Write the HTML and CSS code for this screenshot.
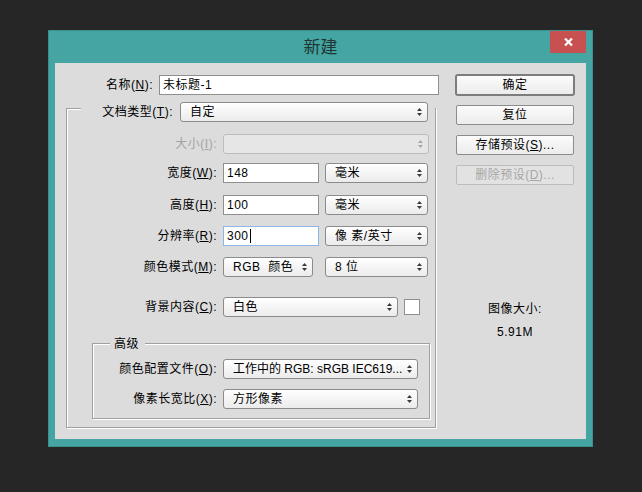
FILE: index.html
```html
<!DOCTYPE html>
<html lang="zh-CN">
<head>
<meta charset="utf-8">
<title>新建</title>
<link rel="stylesheet" href="styles.css">
</head>
<body>
<div class="dialog">
  <div class="titlebar">
    <span></span>
    <div class="title">新建</div>
    <div class="close"><svg width="9" height="8" viewBox="0 0 9 8"><path d="M1 0.5 L8 7.5 M8 0.5 L1 7.5" stroke="#fff" stroke-width="2.2" fill="none"/></svg></div>
  </div>
  <div class="client">
    <div class="main">
      <div class="row name-row">
        <span class="lbl name-lbl">名称(<u>N</u>):</span>
        <div class="input name-in">未标题-1</div>
      </div>
      <div class="group outer">
        <div class="legend-row">
          <span class="lbl type-lbl">文档类型(<u>T</u>):</span>
          <div class="select type-sel"><span>自定</span><svg class="arr" width="5" height="8" viewBox="0 0 5 8"><path d="M2.5 0 L5 3 H0Z M0 5 H5 L2.5 8Z"/></svg></div>
        </div>
        <div class="row r-size">
          <span class="lbl glbl dis">大小(<u>I</u>):</span>
          <div class="select dis size-sel"><span></span><svg class="arr" width="5" height="8" viewBox="0 0 5 8"><path d="M2.5 0 L5 3 H0Z M0 5 H5 L2.5 8Z"/></svg></div>
        </div>
        <div class="row r-w">
          <span class="lbl glbl">宽度(<u>W</u>):</span>
          <div class="input num-in">148</div>
          <div class="select unit-sel"><span>毫米</span><svg class="arr" width="5" height="8" viewBox="0 0 5 8"><path d="M2.5 0 L5 3 H0Z M0 5 H5 L2.5 8Z"/></svg></div>
        </div>
        <div class="row r-h">
          <span class="lbl glbl">高度(<u>H</u>):</span>
          <div class="input num-in">100</div>
          <div class="select unit-sel"><span>毫米</span><svg class="arr" width="5" height="8" viewBox="0 0 5 8"><path d="M2.5 0 L5 3 H0Z M0 5 H5 L2.5 8Z"/></svg></div>
        </div>
        <div class="row r-r">
          <span class="lbl glbl">分辨率(<u>R</u>):</span>
          <div class="input num-in focus">300<span class="caret"></span></div>
          <div class="select unit-sel"><span>像 素/英寸</span><svg class="arr" width="5" height="8" viewBox="0 0 5 8"><path d="M2.5 0 L5 3 H0Z M0 5 H5 L2.5 8Z"/></svg></div>
        </div>
        <div class="row r-m">
          <span class="lbl glbl">颜色模式(<u>M</u>):</span>
          <div class="select mode-sel"><span>RGB&nbsp; 颜色</span><svg class="arr" width="5" height="8" viewBox="0 0 5 8"><path d="M2.5 0 L5 3 H0Z M0 5 H5 L2.5 8Z"/></svg></div>
          <div class="select unit-sel bits"><span>8 位</span><svg class="arr" width="5" height="8" viewBox="0 0 5 8"><path d="M2.5 0 L5 3 H0Z M0 5 H5 L2.5 8Z"/></svg></div>
        </div>
        <div class="row r-bg">
          <span class="lbl glbl">背景内容(<u>C</u>):</span>
          <div class="select bg-sel"><span>白色</span><svg class="arr" width="5" height="8" viewBox="0 0 5 8"><path d="M2.5 0 L5 3 H0Z M0 5 H5 L2.5 8Z"/></svg></div>
          <div class="swatch"></div>
        </div>
        <div class="group inner">
          <div class="legend-text">高级</div>
          <div class="row r-prof">
            <span class="lbl ilbl">颜色配置文件(<u>O</u>):</span>
            <div class="select adv-sel"><span class="tight">工作中的 RGB: sRGB IEC619...</span><svg class="arr" width="5" height="8" viewBox="0 0 5 8"><path d="M2.5 0 L5 3 H0Z M0 5 H5 L2.5 8Z"/></svg></div>
          </div>
          <div class="row r-px">
            <span class="lbl ilbl">像素长宽比(<u>X</u>):</span>
            <div class="select adv-sel"><span>方形像素</span><svg class="arr" width="5" height="8" viewBox="0 0 5 8"><path d="M2.5 0 L5 3 H0Z M0 5 H5 L2.5 8Z"/></svg></div>
          </div>
        </div>
      </div>
    </div>
    <div class="side">
      <div class="btn default">确定</div>
      <div class="btn b2">复位</div>
      <div class="btn b3">存储预设(<u>S</u>)...</div>
      <div class="btn b3 disabled">删除预设(<u>D</u>)...</div>
      <div class="imgsize">
        <div class="is-title">图像大小:</div>
        <div class="is-val">5.91M</div>
      </div>
    </div>
  </div>
</div>
</body>
</html>
```
FILE: styles.css
```css
* { box-sizing: border-box; }
body {
  margin: 0;
  padding: 30px 0 0 48px;
  background: #262626;
  font-family: "Liberation Sans", "Noto Sans CJK SC", sans-serif;
  font-size: 12px;
  letter-spacing: 0.5px;
  color: #000;
}
u { text-decoration: underline; text-underline-offset: 1px; }

.dialog {
  width: 545px;
  height: 417px;
  border: 1px solid #3b8f8c;
  background: #45a5a2;
  padding: 0 6px 7px;
  display: flex;
  flex-direction: column;
}
.titlebar {
  height: 32px;
  display: grid;
  grid-template-columns: 36px 1fr 36px;
}
.title {
  text-align: center;
  font-size: 17px;
  line-height: 30px;
  padding-top: 2px;
  color: #1f3534;
  letter-spacing: 0;
}
.close {
  height: 22px;
  background: #c75050;
  display: flex;
  align-items: center;
  justify-content: center;
}
.client {
  height: 376px;
  background: #dcdcdc;
  display: flex;
}
.main { width: 385px; }
.row {
  display: flex;
  align-items: center;
  height: 20px;
}
.lbl {
  text-align: right;
  white-space: nowrap;
  line-height: 20px;
  flex: none;
}
.dis { color: #a3a3a3; }

.input {
  height: 20px;
  background: #fff;
  border: 1px solid #8f8f8f;
  padding-left: 3px;
  line-height: 18px;
  white-space: nowrap;
  display: flex;
  align-items: center;
}
.input.focus { border-color: #8cb7e2; }
.caret {
  display: inline-block;
  width: 1px;
  height: 14px;
  background: #000;
  margin-left: 1px;
}
.select {
  height: 20px;
  border: 1px solid #8b8b8b;
  border-radius: 3px;
  background: linear-gradient(#ffffff, #ebebeb);
  display: flex;
  align-items: center;
  justify-content: space-between;
  gap: 4px;
  padding: 0 5px 0 9px;
  white-space: nowrap;
  line-height: 18px;
}
.select span { overflow: hidden; min-width: 0; }
.select .tight { letter-spacing: 0; }
.arr { fill: #3a3a3a; flex: none; }
.select.dis {
  background: #e6e6e6;
  border-color: #bdbdbd;
}
.select.dis .arr { fill: #a8a8a8; }

/* name row */
.name-row { margin-top: 12px; gap: 6px; }
.name-lbl { width: 98px; }
.name-in { width: 280px; }

/* groups */
.group {
  border: 1px solid #a0a0a0;
  box-shadow: 1px 1px 0 #fff, inset 1px 1px 0 #fff;
}
.outer {
  margin: 13px 0 0 11px;
  width: 370px;
  padding-bottom: 8px;
}
.legend-row {
  margin: -7px 0 0 14px;
  height: 20px;
  background: #dcdcdc;
  display: flex;
  align-items: center;
  gap: 7px;
}
.type-lbl { width: 92px; }
.type-sel { width: 248px; }

.glbl { width: 150px; }
.row.r-size, .row.r-w, .row.r-h, .row.r-r, .row.r-m, .row.r-bg { gap: 6px; }
.r-size { margin-top: 12px; }
.r-w { margin-top: 9px; }
.r-h { margin-top: 12px; }
.r-r { margin-top: 11px; }
.r-m { margin-top: 11px; }
.r-bg { margin-top: 20px; }
.size-sel { width: 206px; }
.num-in { width: 96px; }
.unit-sel { width: 103px; }
.mode-sel { width: 90px; }
.bits { margin-left: 6px; }
.bg-sel { width: 175px; }
.swatch {
  width: 16px;
  height: 16px;
  background: #fff;
  border: 1px solid #8f8f8f;
}

.inner {
  margin: 26px 0 0 25px;
  width: 338px;
  padding-bottom: 9px;
}
.legend-text {
  margin: -7px 0 0 17px;
  height: 14px;
  line-height: 14px;
  padding: 0 6px 0 4px;
  background: #dcdcdc;
  width: max-content;
}
.ilbl { width: 124px; }
.r-prof, .r-px { gap: 6px; }
.r-prof { margin-top: 8px; }
.r-px { margin-top: 10px; }
.adv-sel { width: 195px; }

/* side */
.side {
  margin-left: 15px;
  width: 120px;
  padding-top: 11px;
  display: flex;
  flex-direction: column;
  align-items: center;
}
.btn {
  width: 118px;
  height: 20px;
  border: 1px solid #8c8c8c;
  border-radius: 2px;
  background: linear-gradient(#fbfbfb, #ececec);
  text-align: center;
  line-height: 18px;
  white-space: nowrap;
}
.btn.default {
  width: 120px;
  height: 22px;
  border: 2px solid #7d7d7d;
  border-radius: 3px;
}
.b2 { margin-top: 9px; }
.b3 { margin-top: 10px; }
.btn.disabled {
  color: #a6a6a6;
  border-color: #bcbcbc;
  background: #e2e2e2;
}
.imgsize {
  margin-top: 116px;
  text-align: center;
  line-height: 16px;
}
.is-val { margin-top: 7px; }
```
